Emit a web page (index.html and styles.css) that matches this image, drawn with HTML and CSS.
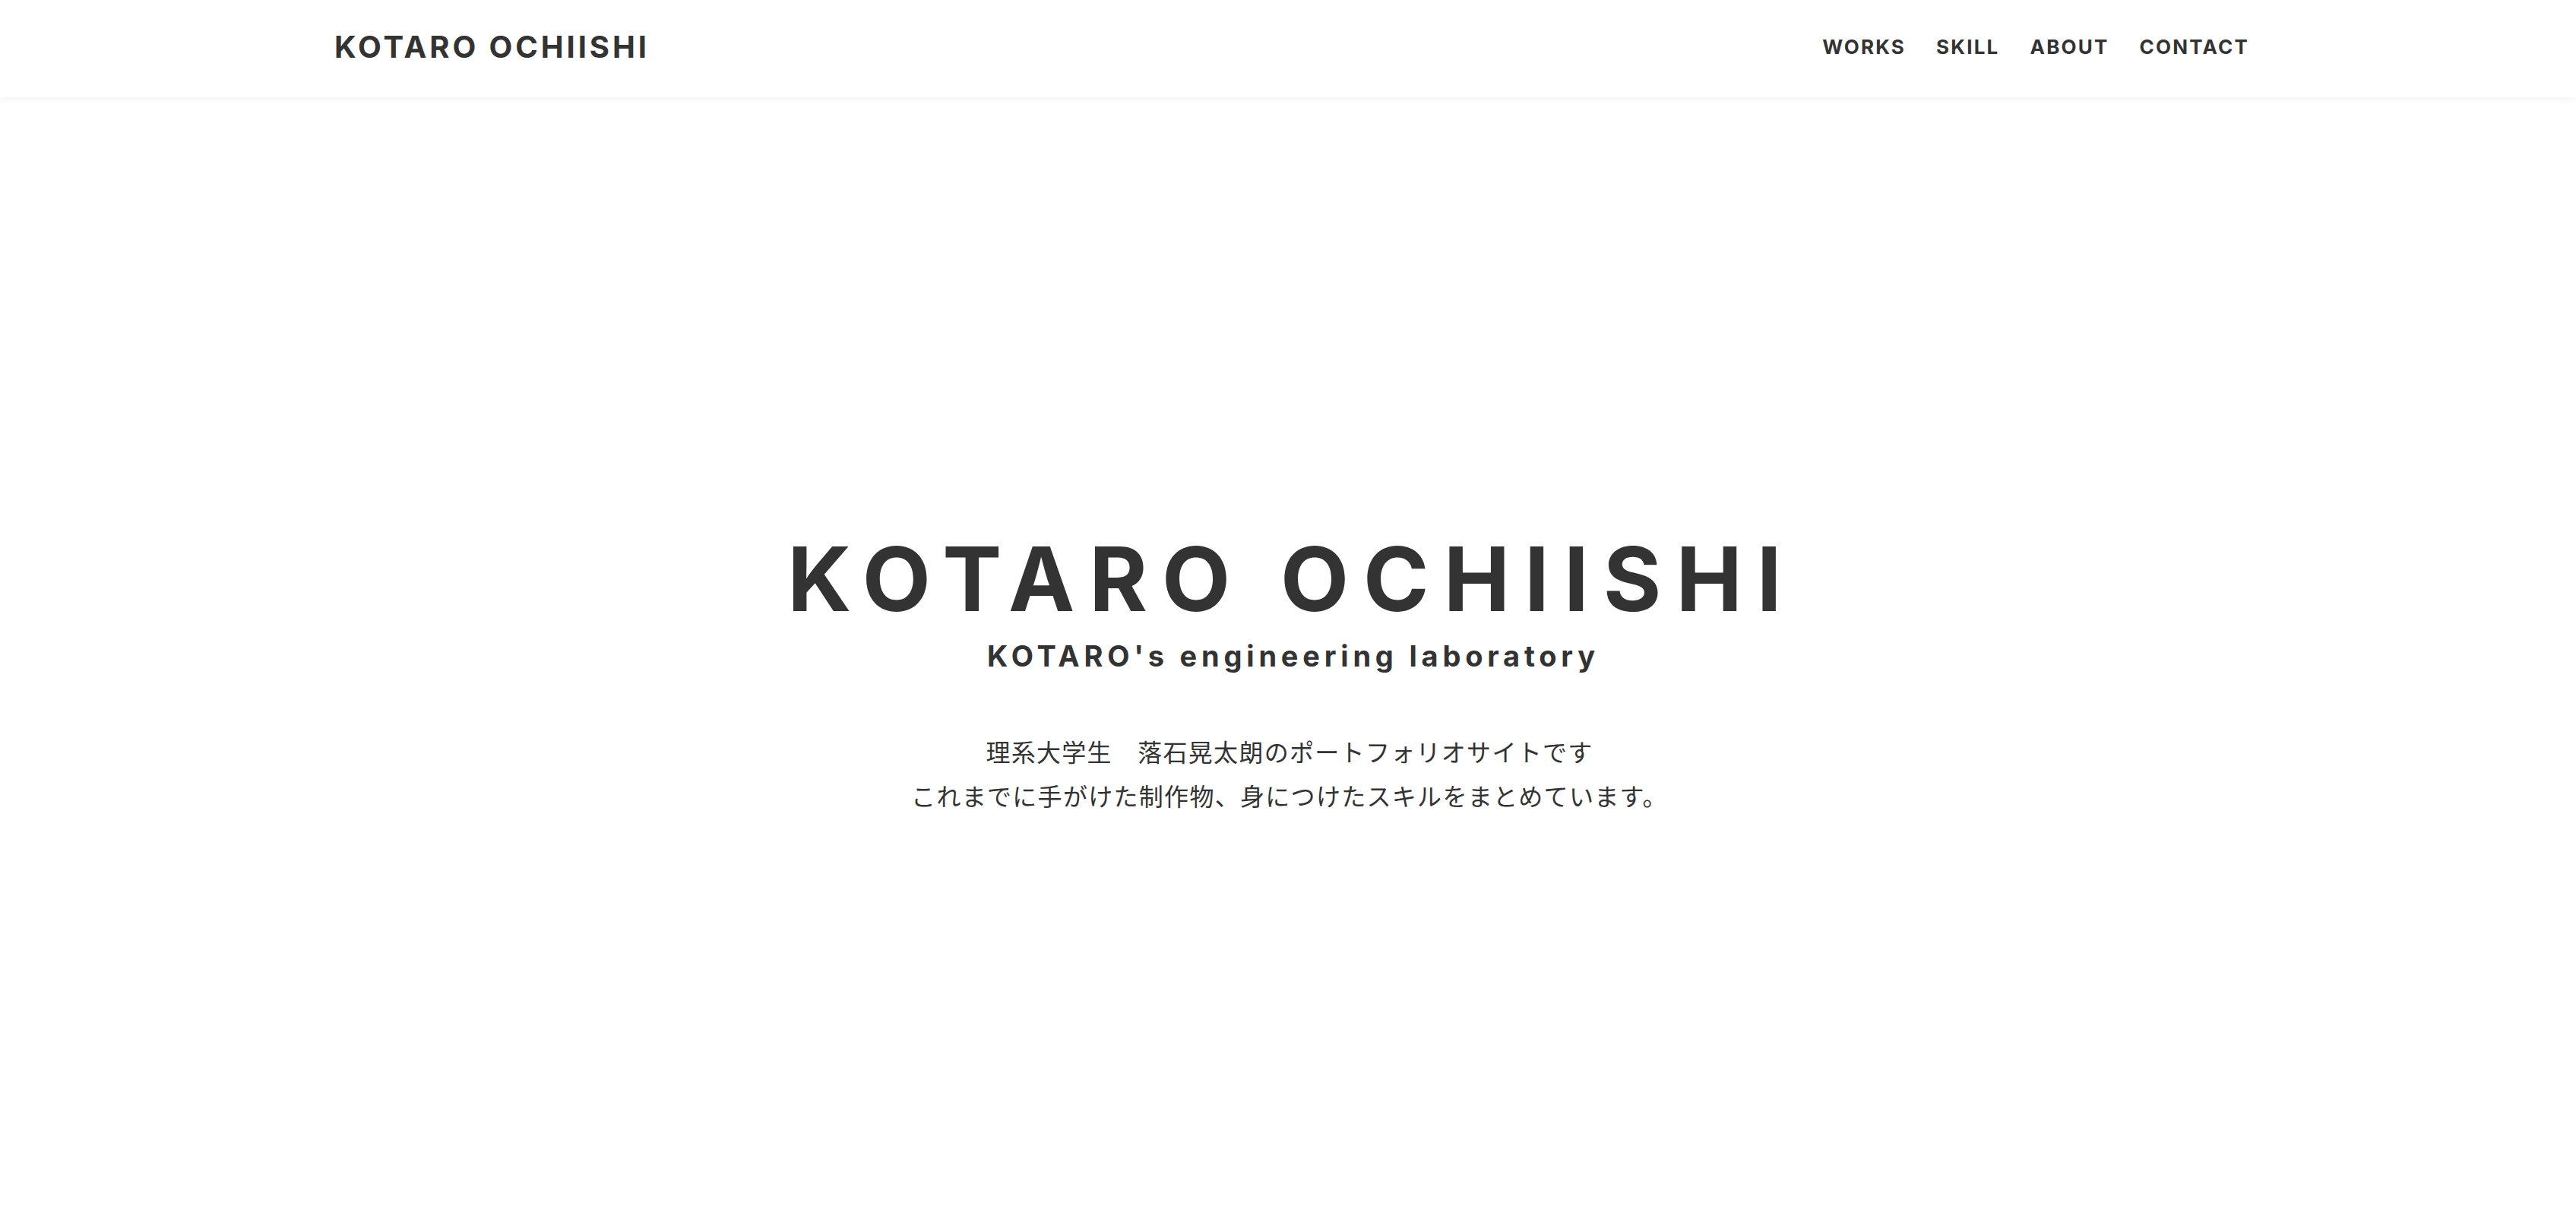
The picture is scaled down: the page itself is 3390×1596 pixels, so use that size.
FILE: index.html
```html
<!DOCTYPE html>
<html lang="ja">
<head>
<meta charset="utf-8">
<title>KOTARO OCHIISHI</title>
<link rel="stylesheet" href="styles.css">
</head>
<body>
<header class="site-header">
  <div class="header-inner">
    <a class="logo" href="#">KOTARO OCHIISHI</a>
    <nav class="nav">
      <a class="nav-link" href="#works">WORKS</a>
      <a class="nav-link" href="#skill">SKILL</a>
      <a class="nav-link" href="#about">ABOUT</a>
      <a class="nav-link" href="#contact">CONTACT</a>
    </nav>
  </div>
</header>
<main class="hero">
  <h1 class="hero-title">KOTARO OCHIISHI</h1>
  <p class="hero-sub">KOTARO's engineering laboratory</p>
  <p class="hero-text">理系大学生　落石晃太朗のポートフォリオサイトです<br>これまでに手がけた制作物、身につけたスキルをまとめています。</p>
</main>
</body>
</html>
```
FILE: styles.css
```css
* { box-sizing: border-box; }
html, body { margin: 0; padding: 0; background: #fff; }
body { color: #333; font-family: "Inter", "Noto Sans CJK JP", sans-serif; }
a { color: inherit; text-decoration: none; }

.site-header {
  height: 128px;
  background: #fff;
  box-shadow: 0 3px 10px rgba(0, 0, 0, 0.05);
  position: relative;
  z-index: 1;
}
.header-inner {
  max-width: 2530px;
  height: 100%;
  margin: 0 auto;
  padding: 0 0 5px 10px;
  display: flex;
  align-items: center;
  justify-content: space-between;
}
.logo {
  font-weight: 700;
  font-size: 40px;
  letter-spacing: 3.9px;
}
.nav { display: flex; gap: 40px; }
.nav-link {
  font-weight: 700;
  font-size: 26px;
  letter-spacing: 2.2px;
}

.hero {
  display: flex;
  flex-direction: column;
  align-items: center;
  padding-top: 575px;
}
.hero-title {
  margin: 0;
  font-size: 117px;
  font-weight: 700;
  line-height: 1;
  letter-spacing: 19px;
  text-indent: 10px;
}
.hero-sub {
  margin: 24px 0 0;
  font-size: 38px;
  font-weight: 700;
  line-height: 1;
  letter-spacing: 5.8px;
  text-indent: 14px;
}
.hero-text {
  margin: 77px 0 0;
  padding-left: 4px;
  font-family: "Noto Sans CJK JP", sans-serif;
  font-size: 32px;
  line-height: 58px;
  letter-spacing: 1.3px;
  text-align: center;
}
```
